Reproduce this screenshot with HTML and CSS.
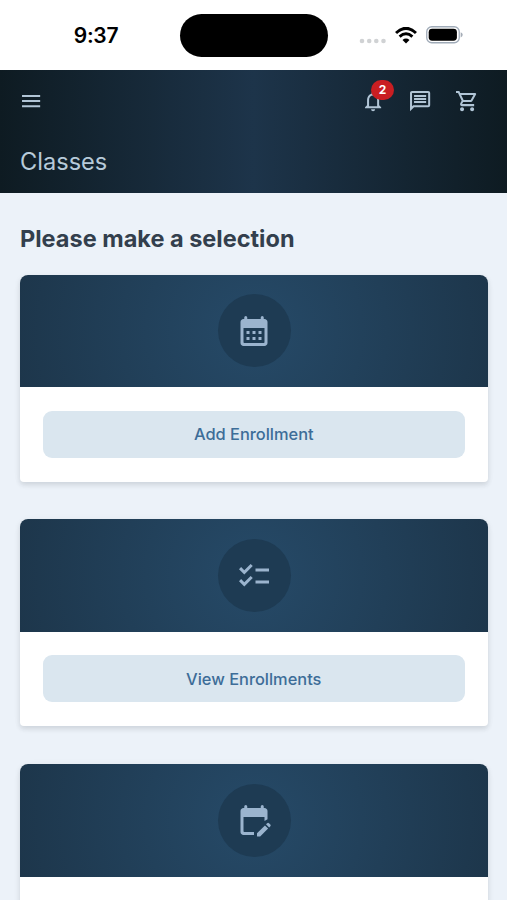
FILE: index.html
```html
<!DOCTYPE html>
<html lang="en">
<head>
<meta charset="utf-8">
<meta name="viewport" content="width=device-width, initial-scale=1">
<title>Classes</title>
<link rel="stylesheet" href="styles.css">
</head>
<body>
<div class="status">
  <div class="time">9:37</div>
  <div class="island"></div>
  <div class="indicators">
    <svg class="dots" viewBox="0 0 27 6"><circle cx="3" cy="3" r="2.3"/><circle cx="10.2" cy="3" r="2.3"/><circle cx="17.3" cy="3" r="2.3"/><circle cx="24.5" cy="3" r="2.3"/></svg>
    <svg class="wifi" viewBox="0 0 22 17"><path d="M1 6Q11-3.4 21 6" stroke-width="3"/><path d="M4.6 9.7Q11 4 17.4 9.7" stroke-width="2.9"/><path class="solid" d="M11 16.4 7.5 12.9Q11 10 14.5 12.9Z"/></svg>
    <svg class="battery" viewBox="0 0 37 18"><rect class="shell" x=".75" y=".75" width="32.5" height="16" rx="5"/><rect x="2.7" y="2.8" width="28.2" height="11.9" rx="3.4"/><path class="cap" d="M34.7 6.2q2 .8 2 2.6t-2 2.6z"/></svg>
  </div>
</div>
<header class="header">
  <nav class="toolbar">
    <svg class="icon" viewBox="0 0 24 24"><path d="M3 18h18v-2H3v2zm0-5h18v-2H3v2zm0-7v2h18V6H3z"/></svg>
    <div class="actions">
      <div class="bell">
        <svg class="icon" viewBox="0 0 24 24"><path d="M12 22c1.1 0 2-.9 2-2h-4c0 1.1.9 2 2 2zm6-6v-5c0-3.07-1.63-5.64-4.5-6.32V4c0-.83-.67-1.5-1.5-1.5s-1.5.67-1.5 1.5v.68C7.64 5.36 6 7.92 6 11v5l-2 2v1h16v-1l-2-2zm-2 1H8v-6c0-2.48 1.51-4.5 4-4.5s4 2.02 4 4.5v6z"/></svg>
        <span class="badge">2</span>
      </div>
      <svg class="icon" viewBox="0 0 24 24"><path d="M4 4h16v12H5.17L4 17.17V4m0-2c-1.1 0-1.99.9-1.99 2L2 22l4-4h14c1.1 0 2-.9 2-2V4c0-1.1-.9-2-2-2H4zm2 10h12v2H6v-2zm0-3h12v2H6V9zm0-3h12v2H6V6z"/></svg>
      <svg class="icon" viewBox="0 0 24 24"><path d="M15.55 13c.75 0 1.41-.41 1.75-1.03l3.58-6.49c.37-.66-.11-1.48-.87-1.48H5.21l-.94-2H1v2h2l3.6 7.59-1.35 2.44C4.52 15.37 5.48 17 7 17h12v-2H7l1.1-2h7.45zM6.16 6h12.15l-2.76 5H8.53L6.16 6zM7 18c-1.1 0-1.99.9-1.99 2S5.9 22 7 22s2-.9 2-2-.9-2-2-2zm10 0c-1.1 0-1.99.9-1.99 2s.89 2 1.99 2 2-.9 2-2-.9-2-2-2z"/></svg>
    </div>
  </nav>
  <h1 class="title">Classes</h1>
</header>
<main class="content">
  <h2 class="prompt">Please make a selection</h2>
  <section class="card">
    <div class="banner"><div class="disc"><svg viewBox="0 0 24 24"><path d="M19 4h-.5V3a1 1 0 0 0-2 0v1h-9V3a1 1 0 0 0-2 0v1H5c-1.11 0-2 .9-2 2v14c0 1.1.89 2 2 2h14c1.1 0 2-.9 2-2V6c0-1.1-.9-2-2-2zm0 15.500q0 .5-.5.5h-13q-.5 0-.5-.5V10h14v9.500zM9 14H7v-2h2v2zm4 0h-2v-2h2v2zm4 0h-2v-2h2v2zm-8 4H7v-2h2v2zm4 0h-2v-2h2v2zm4 0h-2v-2h2v2z"/></svg></div></div>
    <div class="body"><button class="button">Add Enrollment</button></div>
  </section>
  <section class="card">
    <div class="banner"><div class="disc"><svg viewBox="0 0 24 24"><path d="M22 7h-9v2h9V7zm0 8h-9v2h9v-2zM5.54 11 2 7.46l1.41-1.41 2.12 2.12 4.24-4.24 1.41 1.41L5.54 11zm0 8L2 15.46l1.41-1.41 2.12 2.12 4.24-4.24 1.41 1.41L5.54 19z"/></svg></div></div>
    <div class="body"><button class="button">View Enrollments</button></div>
  </section>
  <section class="card">
    <div class="banner"><div class="disc"><svg viewBox="0 0 24 24"><path d="M12 22H5c-1.11 0-2-.9-2-2V6c0-1.1.89-2 2-2h.5V3a1 1 0 0 1 2 0v1h9V3a1 1 0 0 1 2 0v1h.5c1.1 0 2 .9 2 2v5.500l-2 1.100V10H5v9.500q0 .5.5.5H12z"/><path d="M14.400 23q-.4 0-.4-.4v-1.700l5.300-5.300 2.100 2.100-5.300 5.300zM20 14.900l.8-.8q.6-.5 1.200 0l.9.9q.5.600 0 1.200l-.8.800z"/></svg></div></div>
    <div class="body"></div>
  </section>
</main>
</body>
</html>
```
FILE: styles.css
```css
* { box-sizing: border-box; }
body {
  margin: 0;
  height: 900px;
  overflow: hidden;
  background: #ecf2f9;
  font-family: Inter, "Liberation Sans", sans-serif;
}
svg { display: block; flex: none; }
.status {
  display: grid;
  grid-template-columns: 180px 148px 1fr;
  align-items: center;
  height: 70.3px;
  padding-top: 1px;
  background: #fff;
}
.time {
  padding-left: 12px;
  text-align: center;
  font-size: 21px;
  font-weight: 600;
  letter-spacing: -0.3px;
}
.island { height: 43.5px; border-radius: 22px; background: #000; }
.indicators { display: flex; align-items: center; padding-left: 31px; }
.dots { width: 27px; height: 6px; margin: 10px 8.5px 0 0; fill: #d0d2d4; }
.wifi { width: 22px; height: 17px; margin: -1px 9.3px 0 0; fill: none; stroke: #000; }
.wifi .solid { fill: #000; stroke: none; }
.battery { width: 37px; height: 18px; margin-top: -1px; }
.battery .shell { fill: none; stroke: #a0abb8; stroke-width: 1.3; }
.battery .cap { fill: #a5adb7; }
.header {
  height: 122.3px;
  padding: 18.7px 28px 0 19.3px;
  background: linear-gradient(90deg, #0e1b22 0%, #1d344a 50%, #0e1b22 100%);
}
.toolbar { display: flex; justify-content: space-between; }
.actions { display: flex; gap: 22.7px; }
.icon { width: 24.2px; height: 24.2px; fill: #b1c5d6; }
.bell { position: relative; }
.badge {
  position: absolute;
  left: 9.7px;
  top: -9px;
  width: 23.5px;
  height: 20.5px;
  border-radius: 10.25px;
  background: #c91e22;
  color: #fff;
  font-size: 12px;
  font-weight: 700;
  line-height: 20.5px;
  text-align: center;
}
.title {
  margin: 33px 0 0 .7px;
  color: #b7cad9;
  font-size: 23.6px;
  font-weight: 400;
  line-height: 32px;
}
.content { padding: 30.9px 19px 0 20px; }
.prompt {
  margin: 0 0 19.2px;
  color: #333f4d;
  font-size: 23.5px;
  font-weight: 700;
  line-height: 32px;
}
.card {
  margin-bottom: 37.7px;
  border-radius: 8px 8px 4px 4px;
  background: #fff;
  box-shadow: 0 3px 5px rgba(30, 40, 50, .12), 0 1px 8px rgba(30, 40, 50, .04);
}
.banner {
  display: flex;
  align-items: center;
  justify-content: center;
  height: 112.5px;
  border-radius: 8px 8px 0 0;
  background: radial-gradient(circle at center, #264a68 0%, #1d364b 100%);
}
.disc {
  display: flex;
  align-items: center;
  justify-content: center;
  width: 73px;
  height: 73px;
  border-radius: 50%;
  background: #1e3b53;
}
.disc svg { width: 36px; height: 36px; fill: #9bb4ce; }
.body { height: 94.5px; padding: 23.5px 23.5px 0 23px; }
.button {
  width: 100%;
  height: 47px;
  padding: 0;
  border: 0;
  border-radius: 9px;
  background: #dae6ef;
  color: #3d6d98;
  font: 500 16.4px Inter, "Liberation Sans", sans-serif;
}
```
